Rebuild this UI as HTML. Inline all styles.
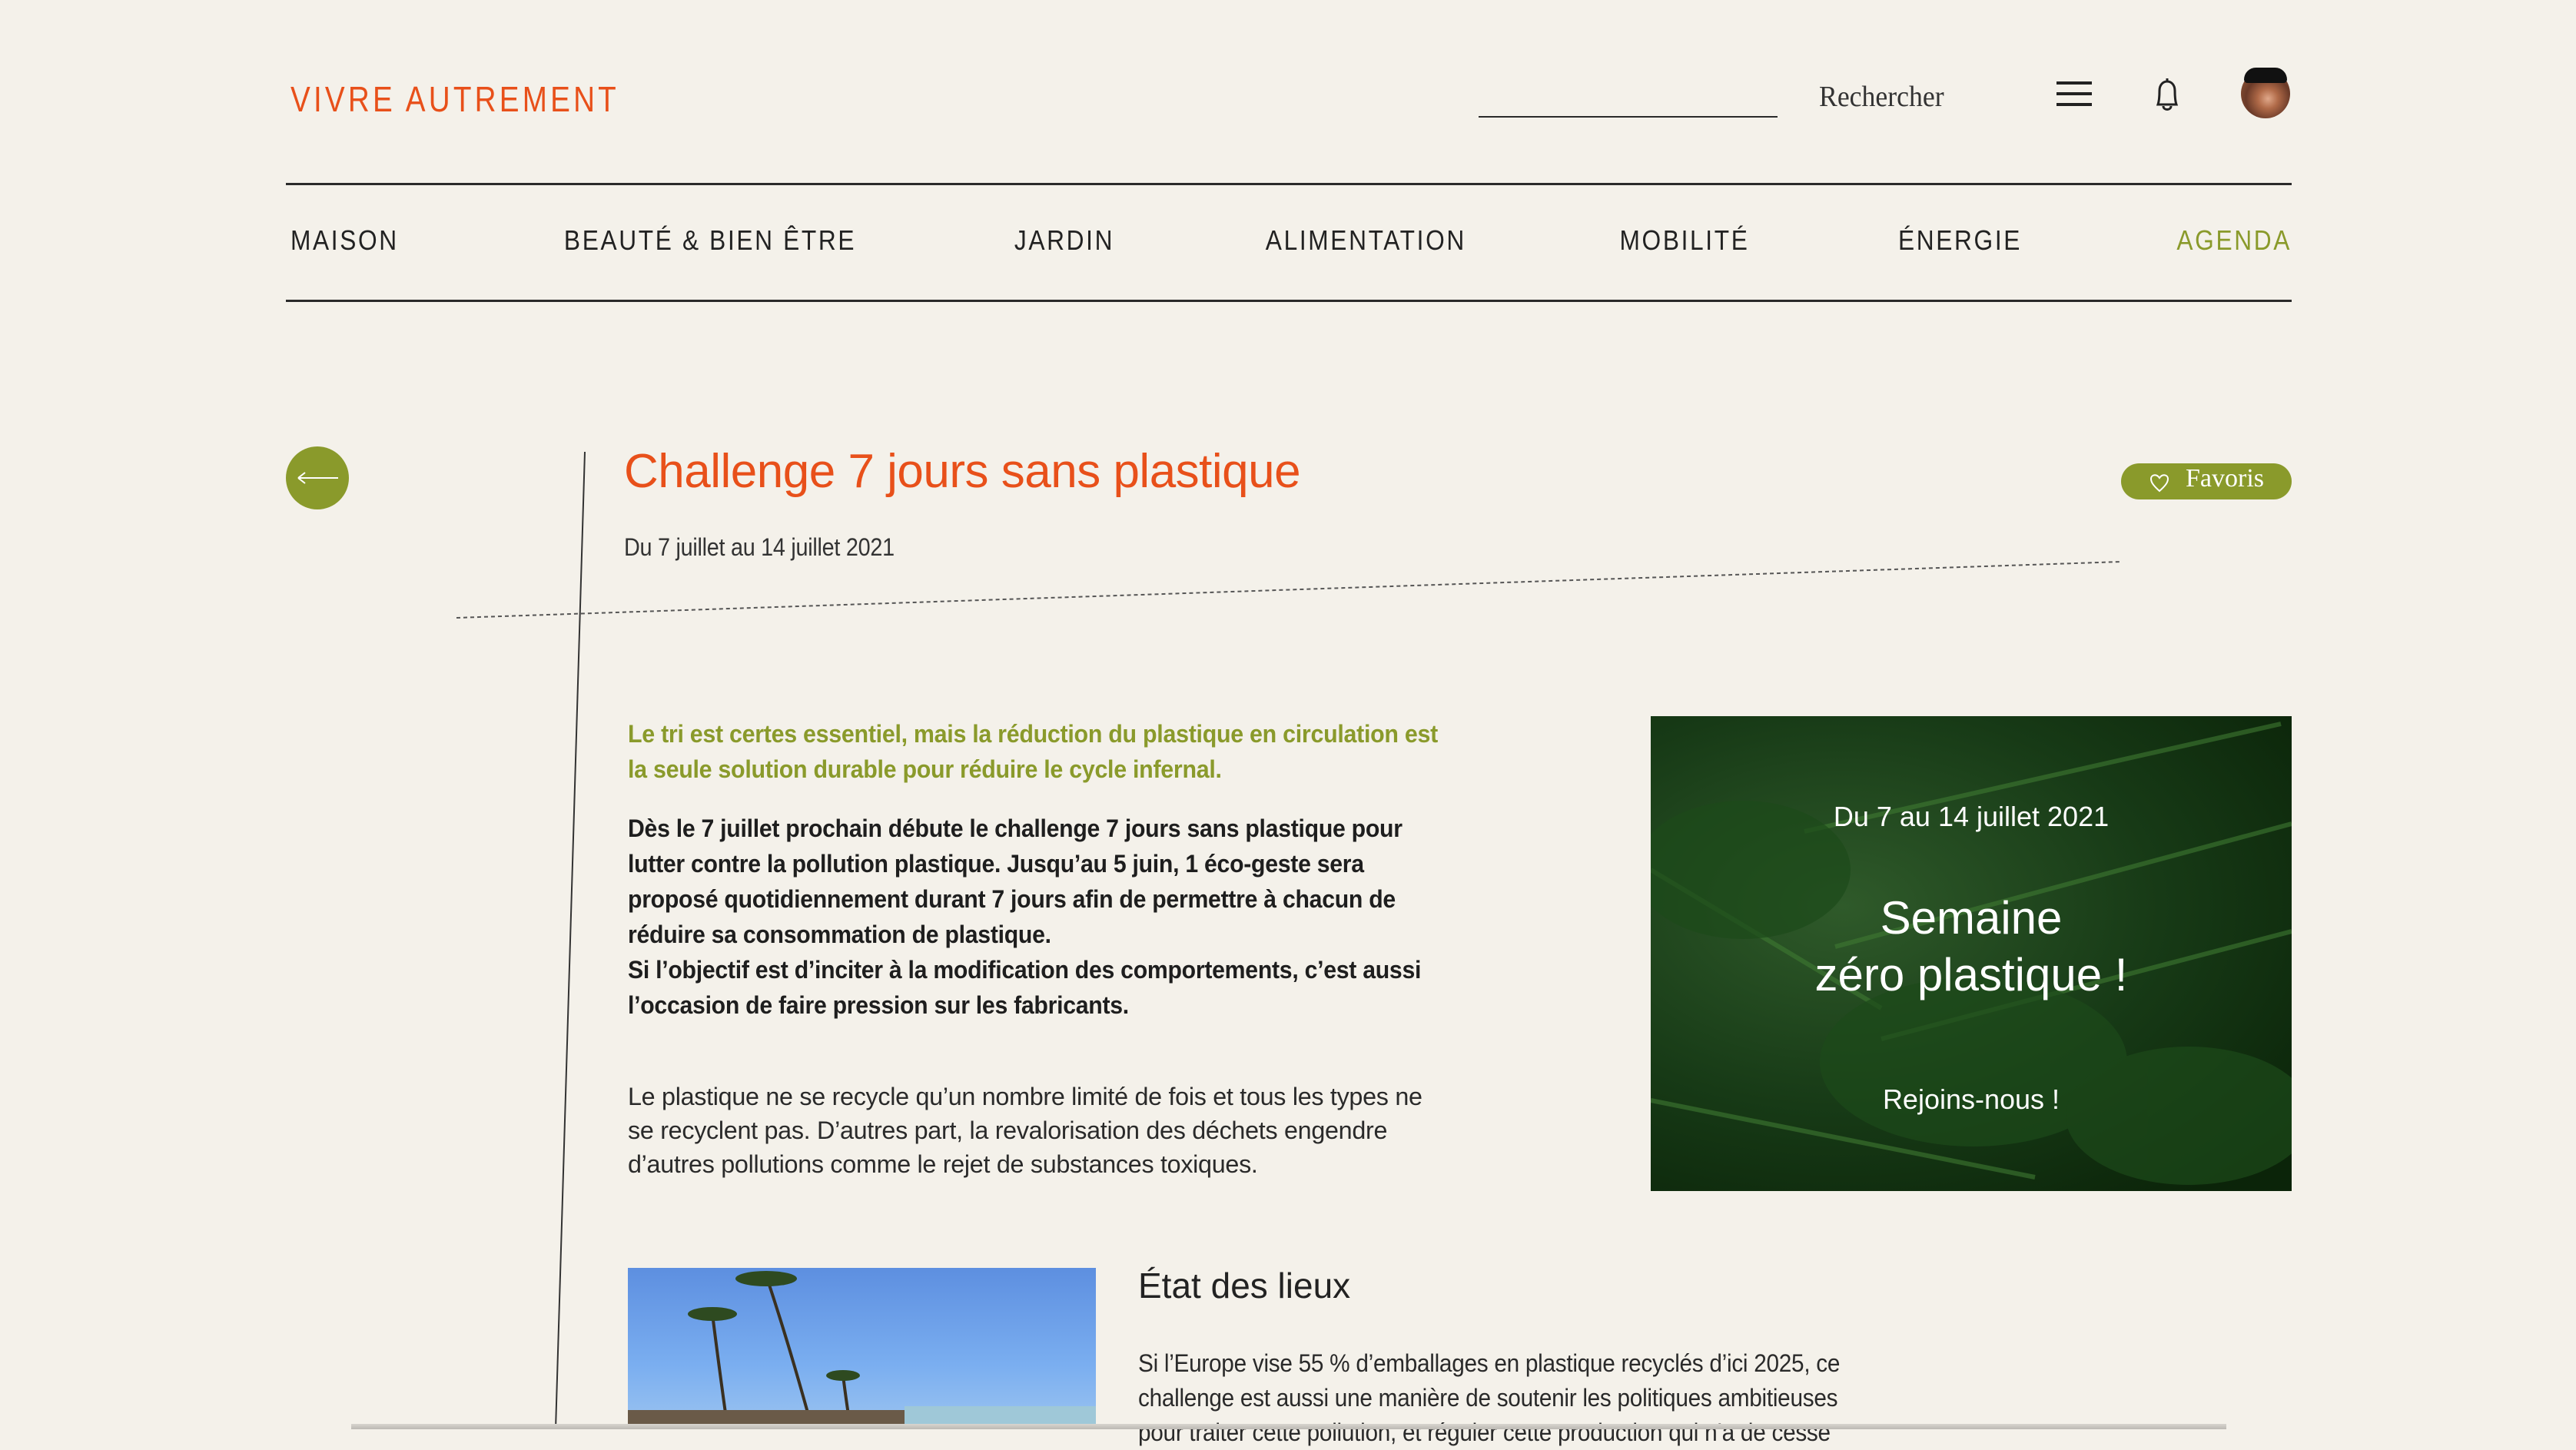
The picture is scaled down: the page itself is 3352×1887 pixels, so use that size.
<!DOCTYPE html>
<html><head><meta charset="utf-8"><style>
*{margin:0;padding:0;box-sizing:border-box}
body{width:3352px;height:1860px;background:#f4f1ea;position:relative;overflow:hidden;font-family:"Liberation Sans",sans-serif;color:#222}
.a{position:absolute;white-space:nowrap}
.logo{left:378px;top:102px;font-size:46px;color:#e8501a;letter-spacing:5px;transform:scaleX(0.84);transform-origin:left}
.nav{position:absolute;left:378px;width:2604px;top:292px;display:flex;justify-content:space-between;font-size:36px;letter-spacing:3px;color:#222}
.nav span{display:inline-block;transform:scaleX(0.88)}
.nav span:first-child{transform-origin:left}
.nav span:last-child{transform-origin:right}
.hl{position:absolute;left:372px;width:2610px;height:3px;background:#2a2a2a}
.body{font-size:32px;letter-spacing:-0.3px;transform-origin:left top}
.g{color:#8a9a2b;font-weight:bold}
.b{font-weight:bold;color:#1e1e1e}
.leaf{position:absolute;left:2148px;top:932px;width:834px;height:618px;overflow:hidden;background:radial-gradient(ellipse at 30% 40%,#2f5a2a,#173a16 50%,#0b2409 90%)}
.leaf .t{position:absolute;left:0;width:100%;text-align:center;color:#fff;font-family:"Liberation Sans",sans-serif}
</style></head><body>
<div class="a logo">VIVRE AUTREMENT</div>
<div class="a" style="left:1924px;top:151px;width:389px;height:2px;background:#2a2a2a"></div>
<div class="a" style="left:2367px;top:104px;font-family:'Liberation Serif',serif;font-size:38px;color:#333;transform:scaleX(0.94);transform-origin:left">Rechercher</div>
<div class="a" style="left:2676px;top:106px;width:46px;height:4px;background:#222"></div>
<div class="a" style="left:2676px;top:120px;width:46px;height:4px;background:#222"></div>
<div class="a" style="left:2676px;top:134px;width:46px;height:4px;background:#222"></div>
<svg class="a" style="left:2800px;top:98px" width="40" height="50" viewBox="0 0 40 50"><path d="M20 4 L20 8 M8 38 C10 32 10 26 10 20 C10 12 15 8 20 8 C25 8 30 12 30 20 C30 26 30 32 32 38 Z M15 40 C15 46 25 46 25 40" fill="none" stroke="#222" stroke-width="3"/></svg>
<div class="a" style="left:2916px;top:90px;width:64px;height:64px;border-radius:50%;background:radial-gradient(circle at 55% 60%,#e0a88a 0,#b06a48 25%,#6a3a28 55%,#a0603a 100%)"></div>
<div class="a" style="left:2920px;top:88px;width:56px;height:20px;border-radius:28px 28px 8px 8px;background:#111"></div>
<div class="hl" style="top:238px"></div>
<div class="nav"><span>MAISON</span><span>BEAUTÉ &amp; BIEN ÊTRE</span><span>JARDIN</span><span>ALIMENTATION</span><span>MOBILITÉ</span><span>ÉNERGIE</span><span style="color:#8a9a2b">AGENDA</span></div>
<div class="hl" style="top:390px"></div>
<div class="a" style="left:372px;top:581px;width:82px;height:82px;border-radius:50%;background:#8a9a2b"></div>
<svg class="a" style="left:386px;top:610px" width="56" height="24"><path d="M2 12 H54 M2 12 L11 5 M2 12 L11 19" stroke="#fff" stroke-width="2" fill="none"/></svg>
<svg class="a" style="left:0;top:0" width="3352" height="1860"><line x1="761" y1="588" x2="723" y2="1860" stroke="#333" stroke-width="2"/><line x1="594" y1="804" x2="2760" y2="731" stroke="#555" stroke-width="2" stroke-dasharray="5 4"/></svg>
<div class="a" style="left:812px;top:578px;font-size:62px;color:#e8501a;letter-spacing:-0.5px">Challenge 7 jours sans plastique</div>
<div class="a body" style="left:812px;top:694px;color:#333;transform:scaleX(0.9)">Du 7 juillet au 14 juillet 2021</div>
<div class="a" style="left:2760px;top:603px;width:222px;height:47px;border-radius:24px;background:#8a9a2b"></div>
<svg class="a" style="left:2795px;top:613px" width="30" height="30"><path d="M15 26 C6 18 4 14 4 10 C4 5 11 3 15 9 C19 3 26 5 26 10 C26 14 24 18 15 26 Z" fill="none" stroke="#fff" stroke-width="2"/></svg>
<div class="a" style="left:2844px;top:604px;font-family:'Liberation Serif',serif;font-size:34px;color:#fff">Favoris</div>
<div class="a body g" style="left:817px;top:932px;line-height:46px;transform:scaleX(0.95)">Le tri est certes essentiel, mais la réduction du plastique en circulation est<br>la seule solution durable pour réduire le cycle infernal.</div>
<div class="a body b" style="left:817px;top:1055px;line-height:46px;transform:scaleX(0.945)">Dès le 7 juillet prochain débute le challenge 7 jours sans plastique pour<br>lutter contre la pollution plastique. Jusqu’au 5 juin, 1 éco-geste sera<br>proposé quotidiennement durant 7 jours afin de permettre à chacun de<br>réduire sa consommation de plastique.<br>Si l’objectif est d’inciter à la modification des comportements, c’est aussi<br>l’occasion de faire pression sur les fabricants.</div>
<div class="a body" style="left:817px;top:1405px;line-height:44px;color:#2a2a2a;transform:scaleX(1.01)">Le plastique ne se recycle qu’un nombre limité de fois et tous les types ne<br>se recyclent pas. D’autres part, la revalorisation des déchets engendre<br>d’autres pollutions comme le rejet de substances toxiques.</div>
<div class="leaf">
<svg width="834" height="618" style="position:absolute;left:0;top:0"><g fill="none" stroke="#3f7a32" stroke-width="6" opacity=".6"><path d="M200 150 L820 10"/><path d="M240 300 L834 140"/><path d="M300 420 L834 280"/><path d="M0 500 L500 600"/><path d="M0 200 L300 380"/></g><g fill="#1d4a1a" opacity=".7"><ellipse cx="120" cy="200" rx="140" ry="90"/><ellipse cx="420" cy="450" rx="200" ry="110"/><ellipse cx="700" cy="520" rx="160" ry="90"/></g></svg>
<div class="t" style="top:110px;font-size:36px">Du 7 au 14 juillet 2021</div>
<div class="t" style="top:226px;font-size:60px;line-height:74px">Semaine<br>zéro plastique !</div>
<div class="t" style="top:478px;font-size:36px">Rejoins-nous !</div>
</div>
<div class="a" style="left:1481px;top:1646px;font-size:46px;color:#222">État des lieux</div>
<div class="a body" style="left:1481px;top:1752px;line-height:45px;color:#2a2a2a;transform:scaleX(0.93)">Si l’Europe vise 55 % d’emballages en plastique recyclés d’ici 2025, ce<br>challenge est aussi une manière de soutenir les politiques ambitieuses<br>pour traiter cette pollution, et réguler cette production qui n’a de cesse</div>
<div class="a" style="left:817px;top:1650px;width:609px;height:210px;background:linear-gradient(180deg,#5d8fe0,#7aaef0 60%,#9cc4f0);overflow:hidden">
<svg width="609" height="210"><g stroke="#3a3020" stroke-width="4" fill="none"><path d="M180 10 Q210 100 240 210"/><path d="M110 60 Q120 140 130 210"/><path d="M280 140 Q285 180 290 210"/></g><g fill="#2e4a20"><ellipse cx="180" cy="14" rx="40" ry="10"/><ellipse cx="110" cy="60" rx="32" ry="9"/><ellipse cx="280" cy="140" rx="22" ry="7"/></g><rect x="0" y="185" width="609" height="25" fill="#6a5a48"/><rect x="360" y="180" width="249" height="30" fill="#9fc8d8"/></svg></div>
<div class="a" style="left:457px;top:1853px;width:2440px;height:7px;background:linear-gradient(#d8d5cf,#bcb9b3)"></div>
</body></html>
